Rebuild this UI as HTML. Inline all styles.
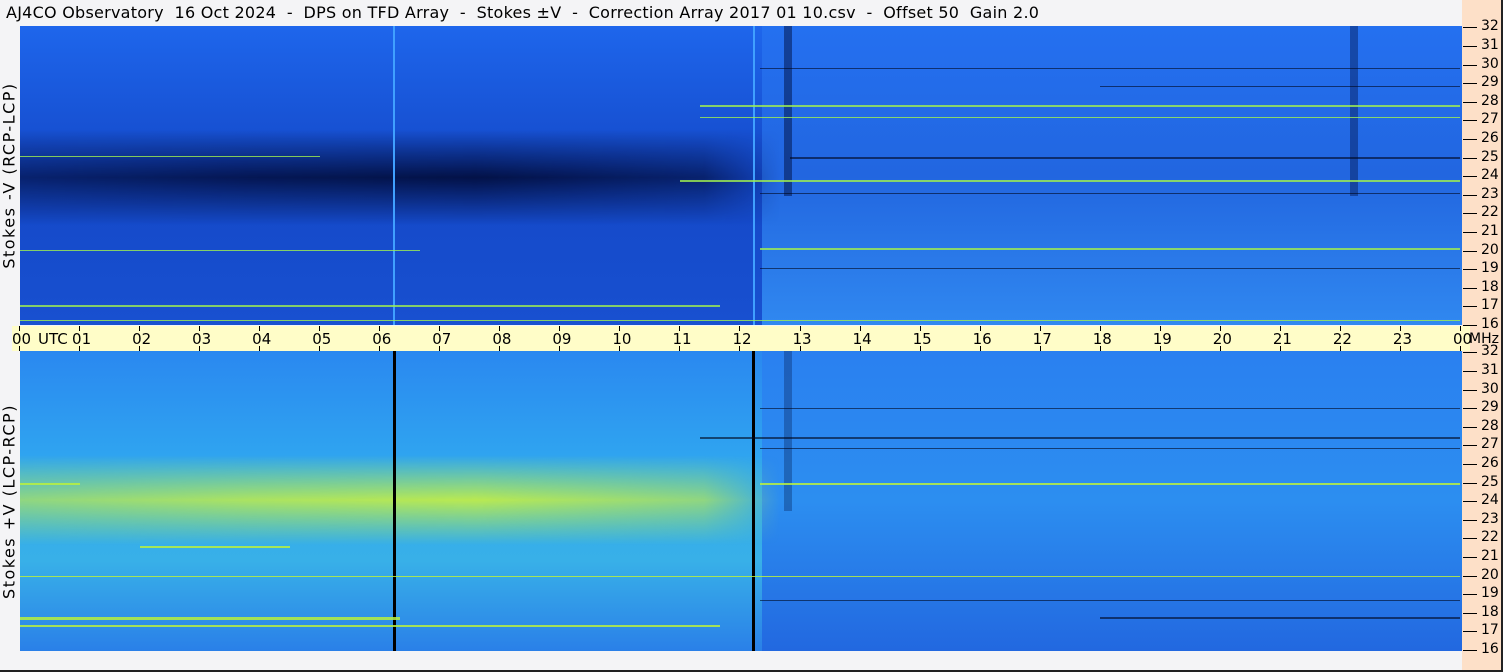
<!DOCTYPE html>
<html><head><meta charset="utf-8"><style>
html,body{margin:0;padding:0;}
body{width:1503px;height:672px;background:#f4f4f6;position:relative;overflow:hidden;font-family:"DejaVu Sans","Liberation Sans",sans-serif;}
.t{position:absolute;font-size:16px;color:#000;white-space:pre;}
</style></head><body>
<svg width="1503" height="672" style="position:absolute;left:0;top:0" xmlns="http://www.w3.org/2000/svg">
<defs>
<linearGradient id="darkV" x1="0" y1="0" x2="0" y2="1">
<stop offset="0" stop-color="#000830" stop-opacity="0"/>
<stop offset="0.5" stop-color="#000830" stop-opacity="0.85"/>
<stop offset="1" stop-color="#000830" stop-opacity="0"/>
</linearGradient>
<linearGradient id="fadeH" x1="0" y1="0" x2="1" y2="0">
<stop offset="0" stop-color="#fff" stop-opacity="0.7"/>
<stop offset="0.3" stop-color="#fff" stop-opacity="0.9"/>
<stop offset="0.6" stop-color="#fff" stop-opacity="1"/>
<stop offset="0.9" stop-color="#fff" stop-opacity="0.7"/>
<stop offset="1" stop-color="#fff" stop-opacity="0"/>
</linearGradient>
<mask id="mH"><rect x="20" y="0" width="760" height="672" fill="url(#fadeH)"/></mask>
<linearGradient id="topL" x1="0" y1="0" x2="0" y2="1">
<stop offset="0" stop-color="#1e66ec"/>
<stop offset="0.5" stop-color="#1448c8"/>
<stop offset="1" stop-color="#1850d0"/>
</linearGradient>
<linearGradient id="topR" x1="0" y1="0" x2="0" y2="1">
<stop offset="0" stop-color="#2470f0"/>
<stop offset="0.5" stop-color="#2266e0"/>
<stop offset="1" stop-color="#3088f0"/>
</linearGradient>
<linearGradient id="yelV" x1="0" y1="0" x2="0" y2="1">
<stop offset="0" stop-color="#b0f050" stop-opacity="0"/>
<stop offset="0.5" stop-color="#c8f040" stop-opacity="0.9"/>
<stop offset="1" stop-color="#b0f050" stop-opacity="0"/>
</linearGradient>
<linearGradient id="botL" x1="0" y1="0" x2="0" y2="1">
<stop offset="0" stop-color="#2a88f0"/>
<stop offset="0.4" stop-color="#30a8f0"/>
<stop offset="0.7" stop-color="#38b0e8"/>
<stop offset="1" stop-color="#2a80e8"/>
</linearGradient>
<linearGradient id="botR" x1="0" y1="0" x2="0" y2="1">
<stop offset="0" stop-color="#2a80f0"/>
<stop offset="0.5" stop-color="#2c8ef0"/>
<stop offset="1" stop-color="#2268e0"/>
</linearGradient>
</defs>
<rect x="1462" y="0" width="39" height="672" fill="#fde0c8"/>
<rect x="1501" y="0" width="2" height="672" fill="#222"/>
<rect x="0" y="670" width="1503" height="2" fill="#222"/>
<rect x="20" y="26" width="742" height="299" fill="url(#topL)"/>
<rect x="762" y="26" width="700" height="299" fill="url(#topR)"/>
<rect x="20" y="130" width="760" height="95" fill="url(#darkV)" mask="url(#mH)"/>
<rect x="784" y="26" width="8" height="170" fill="#001040" opacity="0.5"/>
<rect x="1350" y="26" width="8" height="170" fill="#001040" opacity="0.4"/>
<rect x="393" y="26" width="2" height="299" fill="#40a0ff"/>
<rect x="753" y="26" width="2" height="299" fill="#40a0ff"/>
<g fill="#a0f050" opacity="0.8">
<rect x="700" y="105" width="760" height="2"/><rect x="700" y="117" width="760" height="1"/>
<rect x="680" y="180" width="780" height="2"/><rect x="760" y="248" width="700" height="2"/>
<rect x="20" y="250" width="400" height="1"/><rect x="20" y="305" width="700" height="2"/>
<rect x="20" y="156" width="300" height="1"/><rect x="20" y="320" width="1440" height="1"/>
</g>
<g fill="#000820" opacity="0.6">
<rect x="790" y="157" width="670" height="2"/><rect x="760" y="68" width="700" height="1"/>
<rect x="760" y="193" width="700" height="1"/><rect x="760" y="268" width="700" height="1"/>
<rect x="1100" y="86" width="360" height="1"/>
</g>
<rect x="12" y="326" width="1458" height="25" fill="#fffdc8"/>
<rect x="20" y="351" width="742" height="300" fill="url(#botL)"/>
<rect x="762" y="351" width="700" height="300" fill="url(#botR)"/>
<rect x="20" y="455" width="760" height="90" fill="url(#yelV)" mask="url(#mH)"/>
<rect x="784" y="351" width="8" height="160" fill="#001040" opacity="0.3"/>
<rect x="393" y="351" width="3" height="300" fill="#000"/>
<rect x="752" y="351" width="3" height="300" fill="#000"/>
<g fill="#b8f040" opacity="0.85">
<rect x="20" y="617" width="380" height="3"/><rect x="20" y="625" width="700" height="2"/>
<rect x="760" y="483" width="700" height="2"/><rect x="20" y="483" width="60" height="2"/>
<rect x="20" y="576" width="1440" height="1"/><rect x="140" y="546" width="150" height="2"/>
</g>
<g fill="#000820" opacity="0.6">
<rect x="700" y="437" width="760" height="2"/><rect x="760" y="448" width="700" height="1"/>
<rect x="1100" y="617" width="360" height="2"/><rect x="760" y="600" width="700" height="1"/>
<rect x="760" y="408" width="700" height="1"/>
</g>
</svg>
<div class="t" style="left:6px;top:3px;letter-spacing:0.25px">AJ4CO Observatory  16 Oct 2024  -  DPS on TFD Array  -  Stokes ±V  -  Correction Array 2017 01 10.csv  -  Offset 50  Gain 2.0</div>
<div class="t" style="left:-131px;top:166px;transform:rotate(-90deg);width:280px;text-align:center;letter-spacing:1.5px">Stokes -V (RCP-LCP)</div>
<div class="t" style="left:-131px;top:492px;transform:rotate(-90deg);width:280px;text-align:center;letter-spacing:1.5px">Stokes +V (LCP-RCP)</div>
<div id="ax"></div>
<script>
var h='';
var lab=['00','01','02','03','04','05','06','07','08','09','10','11','12','13','14','15','16','17','18','19','20','21','22','23','00'];
for(var i=0;i<25;i++){var x=20+i*60.04;
h+='<div style="position:absolute;left:'+(x-1)+'px;top:326px;width:1px;height:5px;background:#000"></div>';
h+='<div style="position:absolute;left:'+(x-1)+'px;top:346px;width:1px;height:5px;background:#000"></div>';
h+='<div class="t" style="left:'+(x-8)+'px;top:330px;font-size:15px">'+lab[i]+'</div>';}
h+='<div class="t" style="left:38px;top:330px;font-size:15px">UTC</div>';
h+='<div class="t" style="left:1469px;top:331px;font-size:14px">MHz</div>';
for(var m=16;m<=32;m++){var y1=325-(m-16)*18.6,y2=650-(m-16)*18.6;
[y1,y2].forEach(function(y){h+='<div style="position:absolute;left:1463px;top:'+Math.round(y)+'px;width:14px;height:1px;background:#000"></div>';
h+='<div class="t" style="left:1481px;top:'+Math.round(y-9)+'px;font-size:14px">'+m+'</div>';});}
document.getElementById('ax').innerHTML=h;
</script>
</body></html>
